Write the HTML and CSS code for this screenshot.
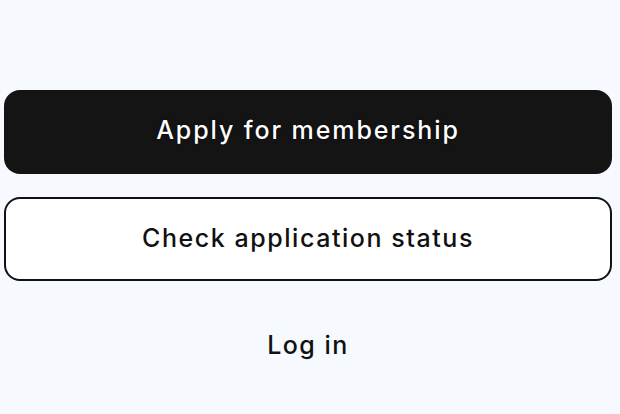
FILE: index.html
```html
<!DOCTYPE html>
<html lang="en">
<head>
<meta charset="utf-8">
<title>Membership</title>
<link rel="stylesheet" href="styles.css">
</head>
<body>
<main class="actions">
  <a class="btn btn-primary" href="#">Apply for membership</a>
  <a class="btn btn-outline" href="#">Check application status</a>
  <a class="btn btn-link" href="#">Log in</a>
</main>
</body>
</html>
```
FILE: styles.css
```css
html, body {
  margin: 0;
  padding: 0;
}
body {
  background: #f6faff;
  font-family: "Inter", "Noto Sans", sans-serif;
  width: 620px;
  height: 414px;
  overflow: hidden;
}
.actions {
  display: flex;
  flex-direction: column;
  gap: 23px;
  padding: 90px 8px 0 4px;
}
.btn {
  box-sizing: border-box;
  height: 84px;
  display: flex;
  align-items: center;
  justify-content: center;
  border-radius: 16px;
  font-size: 25px;
  font-weight: 500;
  letter-spacing: 1.3px;
  text-decoration: none;
  color: #111;
}
.btn-primary {
  background: #141414;
  color: #fff;
  letter-spacing: 1.9px;
  padding-bottom: 4px;
  text-shadow: 0 0 2px #000;
}
.btn-outline {
  background: #fff;
  border: 2px solid #111;
  font-weight: 450;
  letter-spacing: 1.55px;
  padding-bottom: 2px;
}
.btn-link {
  background: transparent;
  font-weight: 450;
  letter-spacing: 1.5px;
  padding-bottom: 2px;
}
```
